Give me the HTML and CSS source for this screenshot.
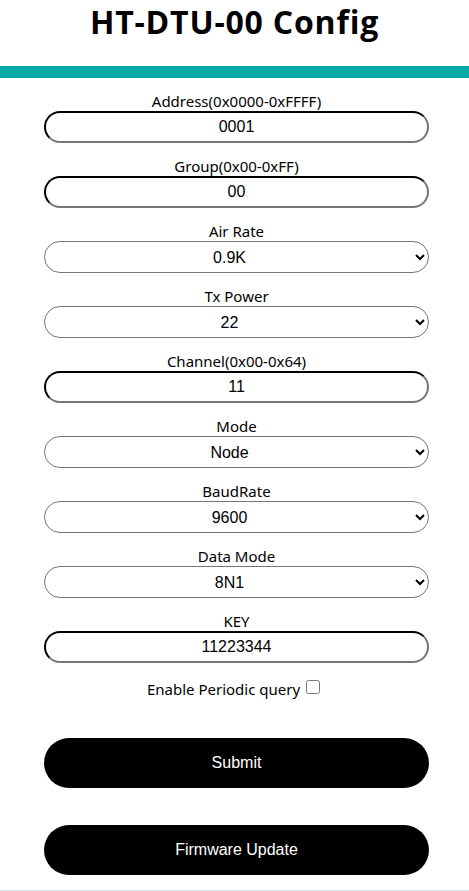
FILE: index.html
```html
<!DOCTYPE html>
<html>
<head>
<meta charset="utf-8">
<link rel="stylesheet" href="styles.css">
</head>
<body>
<h1 class="title">HT-DTU-00 Config</h1>
<div class="bar"></div>
<form class="form">
  <div class="field">
    <label class="label">Address(0x0000-0xFFFF)</label>
    <input class="text" type="text" value="0001">
  </div>
  <div class="field">
    <label class="label">Group(0x00-0xFF)</label>
    <input class="text" type="text" value="00">
  </div>
  <div class="field">
    <label class="label">Air Rate</label>
    <select class="sel"><option>0.9K</option></select>
  </div>
  <div class="field">
    <label class="label">Tx Power</label>
    <select class="sel"><option>22</option></select>
  </div>
  <div class="field">
    <label class="label">Channel(0x00-0x64)</label>
    <input class="text" type="text" value="11">
  </div>
  <div class="field">
    <label class="label">Mode</label>
    <select class="sel"><option>Node</option></select>
  </div>
  <div class="field">
    <label class="label">BaudRate</label>
    <select class="sel"><option>9600</option></select>
  </div>
  <div class="field">
    <label class="label">Data Mode</label>
    <select class="sel"><option>8N1</option></select>
  </div>
  <div class="field">
    <label class="label">KEY</label>
    <input class="text" type="text" value="11223344">
  </div>
  <div class="check">
    <span class="label-inline">Enable Periodic query</span>
    <input class="box" type="checkbox">
  </div>
  <button class="btn submit" type="button">Submit</button>
  <button class="btn fw" type="button">Firmware Update</button>
</form>
<div class="footer"></div>
</body>
</html>
```
FILE: styles.css
```css
html, body {
  margin: 0;
  padding: 0;
  background: #fff;
}
body {
  font-family: "Noto Sans", "Open Sans", sans-serif;
  color: #000;
  height: 891px;
  overflow: hidden;
}
.title {
  margin: 0;
  height: 66px;
  padding-top: 0;
  text-align: center;
  font-family: "Open Sans", sans-serif;
  font-weight: 700;
  font-size: 32px;
  line-height: 44px;
  letter-spacing: 0.8px;
}
.bar {
  height: 12px;
  background: #00aaa8;
}
.form {
  width: 385px;
  margin: 13px 0 0 44px;
  display: flex;
  flex-direction: column;
}
.field {
  display: flex;
  flex-direction: column;
  margin-bottom: 13px;
}
.label {
  display: block;
  text-align: center;
  font-size: 15px;
  line-height: 20px;
  color: #000;
}
.text {
  box-sizing: border-box;
  width: 385px;
  height: 32px;
  margin: 0;
  border: 2px inset #767676;
  border-top-color: #1e1e1e;
  border-left-color: #1e1e1e;
  border-radius: 16px;
  text-align: center;
  font-family: "Liberation Sans", Arial, sans-serif;
  font-size: 16px;
  color: #000;
  padding: 0 10px;
  background: #fff;
  outline: none;
}
.sel {
  box-sizing: border-box;
  width: 385px;
  height: 32px;
  margin: 0;
  border: 1px solid #767676;
  border-radius: 16px;
  text-align: center;
  text-align-last: center;
  font-family: "Liberation Sans", Arial, sans-serif;
  font-size: 16px;
  color: #000;
  background: #fff;
  padding: 0 10px 0 8px;
}
.check {
  display: flex;
  justify-content: center;
  align-items: center;
  gap: 6px;
  height: 26px;
  margin-top: 0;
  padding-right: 6px;
}
.label-inline {
  font-size: 15px;
  line-height: 20px;
}
.box {
  width: 14px;
  height: 14px;
  margin: 0 0 4px 0;
}
.btn {
  width: 385px;
  height: 50px;
  border: none;
  border-radius: 25px;
  background: #000;
  color: #fff;
  font-family: "Liberation Sans", Arial, sans-serif;
  font-size: 16px;
  padding: 0;
}
.submit {
  margin-top: 36px;
}
.fw {
  margin-top: 37px;
}
.footer {
  position: absolute;
  left: 0;
  right: 0;
  top: 890px;
  height: 1px;
  background: #d3e9f3;
}
```
